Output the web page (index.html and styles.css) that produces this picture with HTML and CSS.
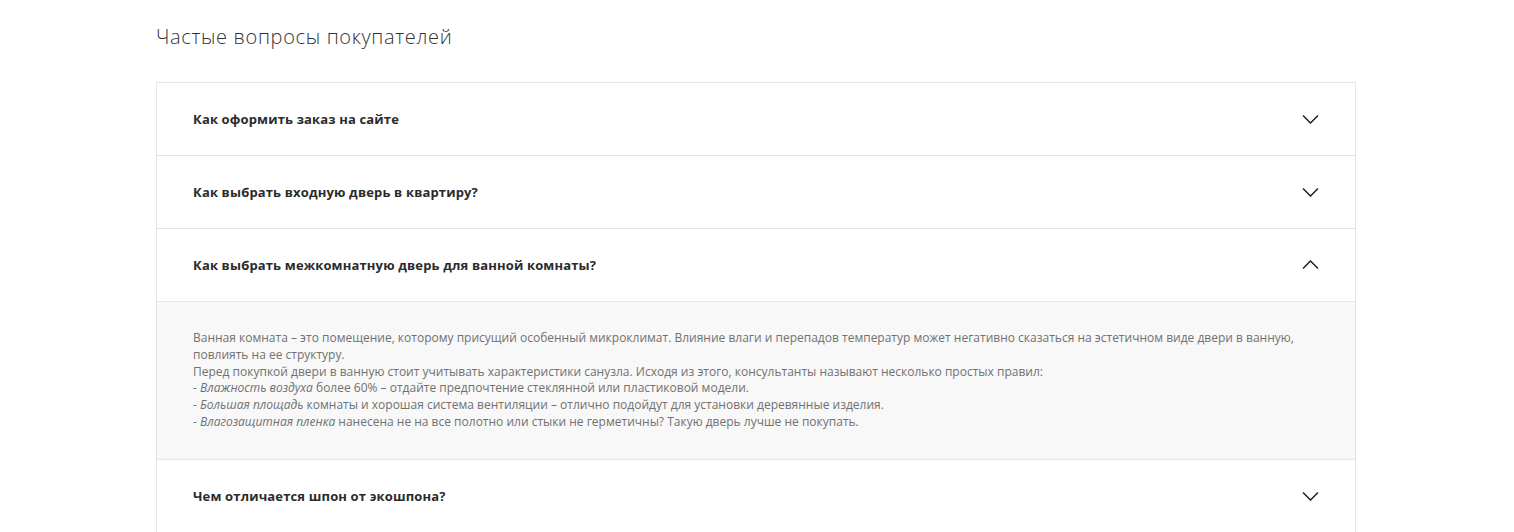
FILE: index.html
```html
<!DOCTYPE html>
<html>
<head>
  <title>faq</title>
  <link rel="stylesheet" href="styles.css">
</head>
<body>
  <section class="faq">
    <h2 class="faq-title">Частые вопросы покупателей</h2>
    <div class="faq-list">
      <div class="faq-item">
        <div class="faq-head">
          <span>Как оформить заказ на сайте</span>
          <svg class="chev" width="17" height="10" viewBox="0 0 17 10"><path d="M1 1.5l7.5 7.5 7.5-7.5" fill="none" stroke="#222" stroke-width="1.5"/></svg>
        </div>
      </div>
      <div class="faq-item">
        <div class="faq-head">
          <span>Как выбрать входную дверь в квартиру?</span>
          <svg class="chev" width="17" height="10" viewBox="0 0 17 10"><path d="M1 1.5l7.5 7.5 7.5-7.5" fill="none" stroke="#222" stroke-width="1.5"/></svg>
        </div>
      </div>
      <div class="faq-item open">
        <div class="faq-head">
          <span>Как выбрать межкомнатную дверь для ванной комнаты?</span>
          <svg class="chev" width="17" height="10" viewBox="0 0 17 10"><path d="M1 8.5l7.5-7.5 7.5 7.5" fill="none" stroke="#222" stroke-width="1.5"/></svg>
        </div>
        <div class="faq-body">
          Ванная комната – это помещение, которому присущий особенный микроклимат. Влияние влаги и перепадов температур может негативно сказаться на эстетичном виде двери в ванную, повлиять на ее структуру.<br>
          Перед покупкой двери в ванную стоит учитывать характеристики санузла. Исходя из этого, консультанты называют несколько простых правил:<br>
          - <em>Влажность воздуха</em> более 60% – отдайте предпочтение стеклянной или пластиковой модели.<br>
          - <em>Большая площадь</em> комнаты и хорошая система вентиляции – отлично подойдут для установки деревянные изделия.<br>
          - <em>Влагозащитная пленка</em> нанесена не на все полотно или стыки не герметичны? Такую дверь лучше не покупать.
        </div>
      </div>
      <div class="faq-item">
        <div class="faq-head">
          <span>Чем отличается шпон от экошпона?</span>
          <svg class="chev" width="17" height="10" viewBox="0 0 17 10"><path d="M1 1.5l7.5 7.5 7.5-7.5" fill="none" stroke="#222" stroke-width="1.5"/></svg>
        </div>
      </div>
    </div>
  </section>
</body>
</html>
```
FILE: styles.css
```css
body {
  margin: 0;
  padding: 0 2px 0 0;
  font-family: "Open Sans", "Noto Sans", sans-serif;
  background: #fff;
  color: #222;
}

.faq {
  width: 1200px;
  margin: 0 auto;
  padding-top: 24px;
}

.faq-title {
  margin: 0 0 32px 0;
  font-size: 20px;
  font-weight: 300;
  line-height: 26px;
  color: #333;
  letter-spacing: 0.65px;
}

.faq-list {
  border: 1px solid #e6e6e6;
  border-bottom: none;
}

.faq-item {
  border-bottom: 1px solid #e6e6e6;
}

.faq-head {
  height: 72px;
  display: flex;
  align-items: center;
  justify-content: space-between;
  padding: 0 36px 0 36px;
  font-size: 13px;
  font-weight: 700;
  color: #2b2b2b;
  letter-spacing: 0.15px;
}

.faq-body {
  background: #f8f8f8;
  border-top: 1px solid #e6e6e6;
  padding: 28px 36px 28px 36px;
  font-size: 12px;
  line-height: 16.8px;
  color: #717171;
}

.faq-body em {
  font-style: italic;
}
```
